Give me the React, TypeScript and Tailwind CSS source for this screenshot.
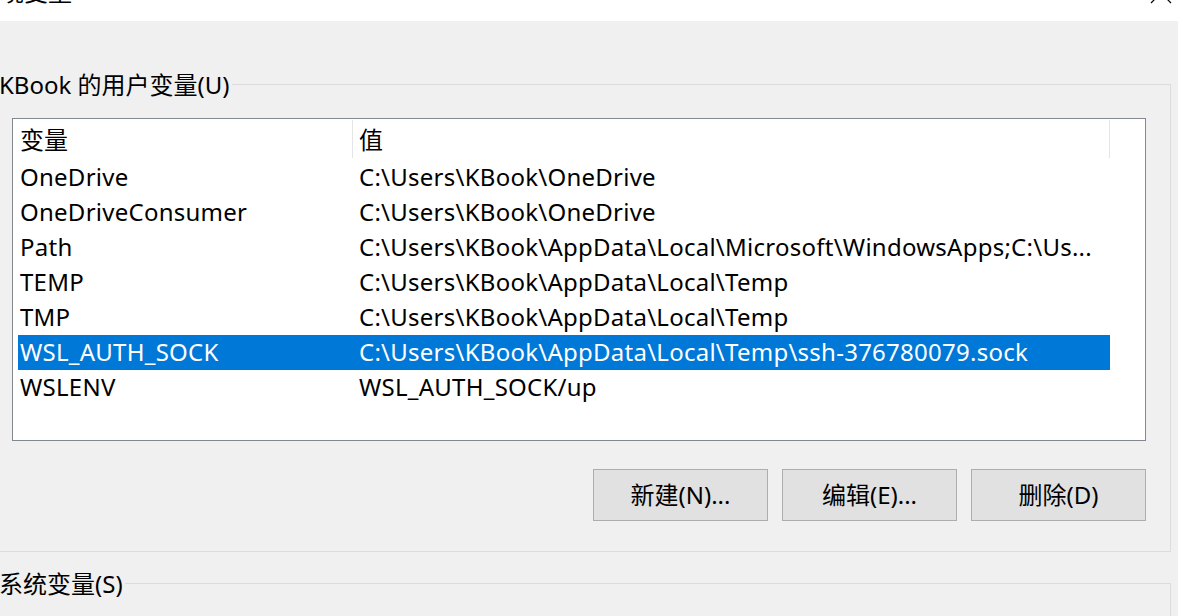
const rows = [
  { name: "OneDrive", value: "C:\\Users\\KBook\\OneDrive" },
  { name: "OneDriveConsumer", value: "C:\\Users\\KBook\\OneDrive" },
  { name: "Path", value: "C:\\Users\\KBook\\AppData\\Local\\Microsoft\\WindowsApps;C:\\Us..." },
  { name: "TEMP", value: "C:\\Users\\KBook\\AppData\\Local\\Temp" },
  { name: "TMP", value: "C:\\Users\\KBook\\AppData\\Local\\Temp" },
  { name: "WSL_AUTH_SOCK", value: "C:\\Users\\KBook\\AppData\\Local\\Temp\\ssh-376780079.sock", selected: true },
  { name: "WSLENV", value: "WSL_AUTH_SOCK/up" },
];

function GroupLabel({ text }: { text: string }) {
  return (
    <span className="absolute left-[8px] top-[-18px] bg-[#f0f0f0] pr-[2px] leading-[35px] text-black">
      {text}
    </span>
  );
}

function WinButton({ label }: { label: string }) {
  return (
    <button className="w-[175px] h-[52px] border border-[#adadad] bg-[#e1e1e1] text-black leading-none">
      {label}
    </button>
  );
}

export default function App() {
  return (
    <div
      className="w-[1178px] h-[616px] overflow-hidden bg-[#f0f0f0] text-[24px]"
      style={{ fontFamily: '"Noto Sans", "Noto Sans CJK SC", sans-serif' }}
    >
      {/* title bar, mostly scrolled off */}
      <div className="h-[21px] bg-white flex justify-between overflow-hidden">
        <span className="ml-[-24px] mt-[-20px] leading-[24px] text-black">环境变量</span>
        <svg className="mt-[-18px] mr-[6px]" width="22" height="22" viewBox="0 0 22 22">
          <path d="M1 1 L21 21 M21 1 L1 21" stroke="#000" strokeWidth="1.2" fill="none" />
        </svg>
      </div>

      {/* user variables group */}
      <div className="relative ml-[-10px] mt-[63px] w-[1181px] border border-[#dcdcdc] pl-[21px] pr-[24px] pt-[33px] pb-[30px]">
        <GroupLabel text="KBook 的用户变量(U)" />
        <div className="h-[323px] border border-[#828790] bg-white">
          <div className="flex h-[41px] items-stretch">
            <div className="w-[339px] pl-[7px] pt-[1px] leading-[40px] text-black">变量</div>
            <div className="w-px h-[38px] mt-[1px] bg-[#e5e5e5]" />
            <div className="w-[756px] pl-[6px] pt-[1px] leading-[40px] text-black">值</div>
            <div className="w-px h-[38px] mt-[1px] bg-[#e5e5e5]" />
          </div>
          {rows.map((r) => (
            <div
              key={r.name}
              className={
                r.selected
                  ? "ml-[5px] w-[1092px] h-[35px] pb-[2px] flex items-center tracking-[0.25px] bg-[#0078d7] text-white"
                  : "ml-[5px] w-[1092px] h-[35px] pb-[2px] flex items-center tracking-[0.25px] text-black"
              }
            >
              <div className="w-[341px] pl-[2px] whitespace-nowrap">{r.name}</div>
              <div className="whitespace-nowrap">{r.value}</div>
            </div>
          ))}
        </div>
        <div className="flex justify-end gap-[14px] mt-[28px]">
          <WinButton label="新建(N)..." />
          <WinButton label="编辑(E)..." />
          <WinButton label="删除(D)" />
        </div>
      </div>

      {/* system variables group */}
      <div className="relative ml-[-10px] mt-[31px] w-[1181px] h-[60px] border border-[#dcdcdc]">
        <GroupLabel text="系统变量(S)" />
      </div>
    </div>
  );
}
